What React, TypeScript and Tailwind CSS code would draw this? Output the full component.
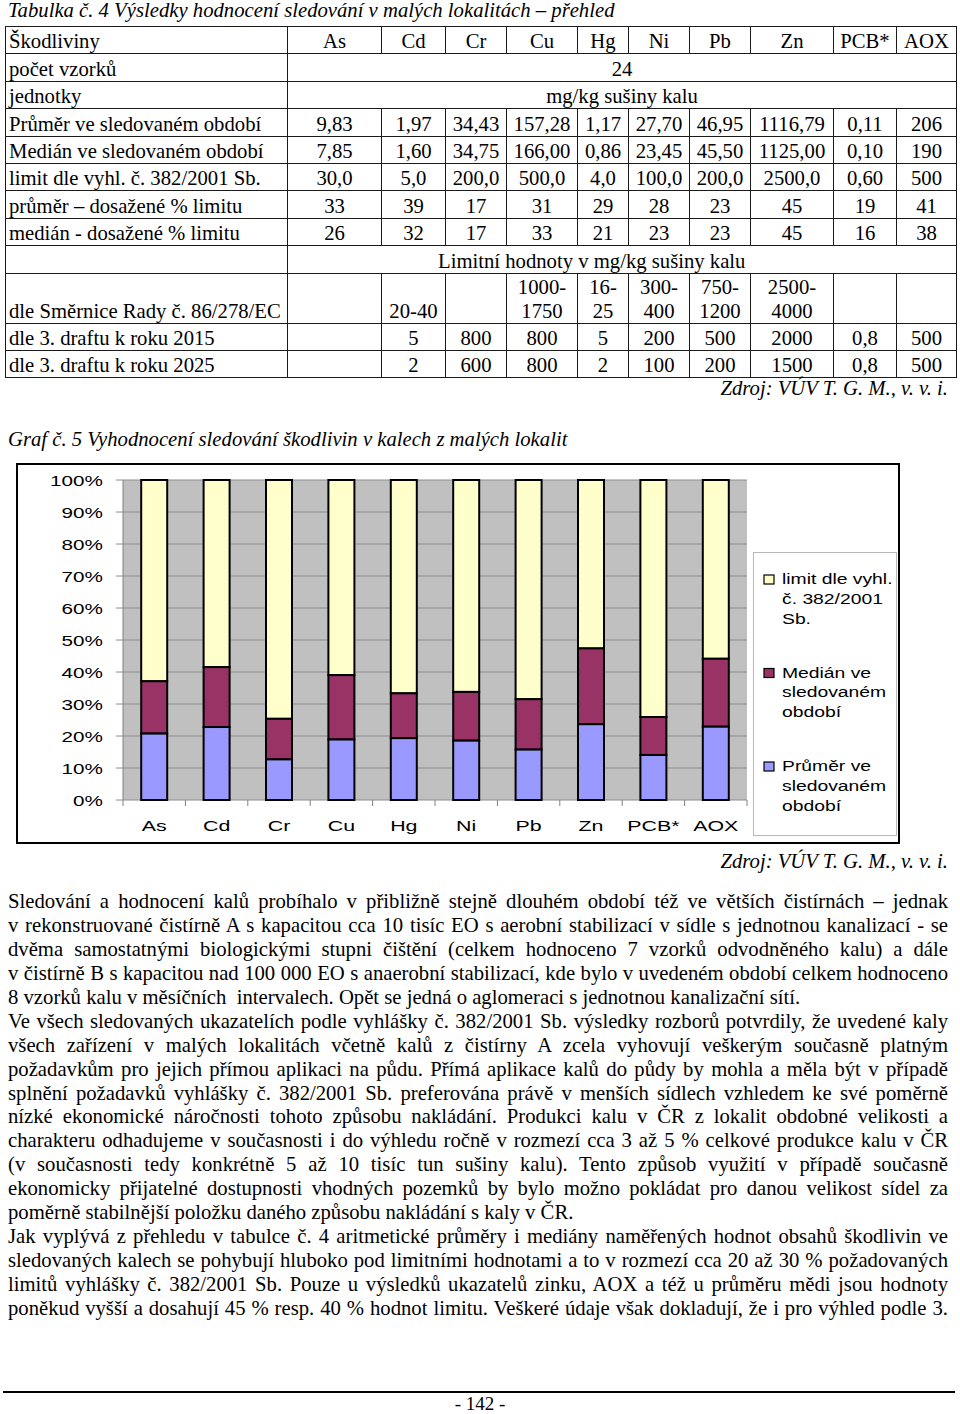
import React from 'react';

const prvky = ['As', 'Cd', 'Cr', 'Cu', 'Hg', 'Ni', 'Pb', 'Zn', 'PCB*', 'AOX'];
const sirky = [282, 94, 64, 61, 71, 51, 61, 61, 83, 63, 60];

const hodnoty: string[][] = [
  ['Průměr ve sledovaném období', '9,83', '1,97', '34,43', '157,28', '1,17', '27,70', '46,95', '1116,79', '0,11', '206'],
  ['Medián ve sledovaném období', '7,85', '1,60', '34,75', '166,00', '0,86', '23,45', '45,50', '1125,00', '0,10', '190'],
  ['limit dle vyhl. č. 382/2001 Sb.', '30,0', '5,0', '200,0', '500,0', '4,0', '100,0', '200,0', '2500,0', '0,60', '500'],
  ['průměr – dosažené % limitu', '33', '39', '17', '31', '29', '28', '23', '45', '19', '41'],
  ['medián - dosažené % limitu', '26', '32', '17', '33', '21', '23', '23', '45', '16', '38'],
];

const limity: string[][] = [
  ['dle 3. draftu k roku 2015', '', '5', '800', '800', '5', '200', '500', '2000', '0,8', '500'],
  ['dle 3. draftu k roku 2025', '', '2', '600', '800', '2', '100', '200', '1500', '0,8', '500'],
];

const smernice = ['dle Směrnice Rady č. 86/278/EC', '', '20-40', '', '1000-\n1750', '16-\n25', '300-\n400', '750-\n1200', '2500-\n4000', '', ''];

// průměr %, medián % limitu
const graf: [number, number][] = [
  [33, 26], [39, 32], [17, 17], [31, 33], [29, 21],
  [28, 23], [23, 23], [45, 45], [19, 16], [41, 38],
];

const odstavec: [string, boolean][] = [
  ['Sledování a hodnocení kalů probíhalo v přibližně stejně dlouhém období též ve větších čistírnách – jednak', true],
  ['v rekonstruované čistírně A s kapacitou cca 10 tisíc EO s aerobní stabilizací v sídle s jednotnou kanalizací - se', true],
  ['dvěma samostatnými biologickými stupni čištění (celkem hodnoceno 7 vzorků odvodněného kalu) a dále', true],
  ['v čistírně B s kapacitou nad 100 000 EO s anaerobní stabilizací, kde bylo v uvedeném období celkem hodnoceno', true],
  ['8 vzorků kalu v měsíčních\u00a0 intervalech. Opět se jedná o aglomeraci s jednotnou kanalizační sítí.', false],
  ['Ve všech sledovaných ukazatelích podle vyhlášky č. 382/2001 Sb. výsledky rozborů potvrdily, že uvedené kaly', true],
  ['všech zařízení v malých lokalitách včetně kalů z čistírny A zcela vyhovují veškerým současně platným', true],
  ['požadavkům pro jejich přímou aplikaci na půdu. Přímá aplikace kalů do půdy by mohla a měla být v případě', true],
  ['splnění požadavků vyhlášky č. 382/2001 Sb. preferována právě v menších sídlech vzhledem ke své poměrně', true],
  ['nízké ekonomické náročnosti tohoto způsobu nakládání. Produkci kalu v ČR z lokalit obdobné velikosti a', true],
  ['charakteru odhadujeme v současnosti i do výhledu ročně v rozmezí cca 3 až 5 % celkové produkce kalu v ČR', true],
  ['(v současnosti tedy konkrétně 5 až 10 tisíc tun sušiny kalu). Tento způsob využití v případě současně', true],
  ['ekonomicky přijatelné dostupnosti vhodných pozemků by bylo možno pokládat pro danou velikost sídel za', true],
  ['poměrně stabilnější položku daného způsobu nakládání s kaly v ČR.', false],
  ['Jak vyplývá z přehledu v tabulce č. 4 aritmetické průměry i mediány naměřených hodnot obsahů škodlivin ve', true],
  ['sledovaných kalech se pohybují hluboko pod limitními hodnotami a to v rozmezí cca 20 až 30 % požadovaných', true],
  ['limitů vyhlášky č. 382/2001 Sb. Pouze u výsledků ukazatelů zinku, AOX a též u průměru mědi jsou hodnoty', true],
  ['poněkud vyšší a dosahují 45 % resp. 40 % hodnot limitu. Veškeré údaje však dokladují, že i pro výhled podle 3.', true],
];

const td = 'border border-[#1a1a1a] p-0 align-bottom text-center';
const tdPrvni = 'border border-[#1a1a1a] p-0 pl-[3px] align-bottom text-left';

function Radek({ bunky }: { bunky: string[] }) {
  return (
    <tr className="h-[27.4px]">
      {bunky.map((b, i) => (
        <td key={i} className={i === 0 ? tdPrvni : td}>
          {b}
        </td>
      ))}
    </tr>
  );
}

function Tabulka() {
  return (
    <table className="ml-[5px] w-[951px] table-fixed border-collapse text-[20.7px] leading-[24px]">
      <colgroup>
        {sirky.map((w, i) => (
          <col key={i} style={{ width: w }} />
        ))}
      </colgroup>
      <tbody>
        <Radek bunky={['Škodliviny', ...prvky]} />
        <tr className="h-[27.4px]">
          <td className={tdPrvni}>počet vzorků</td>
          <td className={td} colSpan={10}>24</td>
        </tr>
        <tr className="h-[27.4px]">
          <td className={tdPrvni}>jednotky</td>
          <td className={td} colSpan={10}>mg/kg sušiny kalu</td>
        </tr>
        {hodnoty.map((r, i) => (
          <Radek key={i} bunky={r} />
        ))}
        <tr className="h-[27.4px]">
          <td className={tdPrvni}></td>
          <td className="border border-[#1a1a1a] p-0 pl-[150px] align-bottom text-left" colSpan={10}>
            Limitní hodnoty v mg/kg sušiny kalu
          </td>
        </tr>
        <tr className="h-[50px]">
          {smernice.map((b, i) => (
            <td key={i} className={(i === 0 ? tdPrvni : td) + ' whitespace-pre-line'}>
              {b}
            </td>
          ))}
        </tr>
        {limity.map((r, i) => (
          <Radek key={i} bunky={r} />
        ))}
      </tbody>
    </table>
  );
}

function Graf() {
  const x0 = 107;
  const y0 = 17;
  const vyska = 320;
  const krok = 62.4;
  const dno = y0 + vyska;
  const sans = "'Liberation Sans', Arial, sans-serif";
  const sx = 1.38;

  const popisek = (t: string, x: number, y: number, size: number, anchor: 'start' | 'middle' | 'end') => (
    <text
      key={t + x + y}
      transform={`translate(${x} ${y}) scale(${sx} 1)`}
      fontFamily={sans}
      fontSize={size}
      textAnchor={anchor}
      fill="#000"
    >
      {t}
    </text>
  );

  const legenda: [string, string[], number, number][] = [
    ['#ffffcc', ['limit dle vyhl.', 'č. 382/2001', 'Sb.'], 112, 121],
    ['#993366', ['Medián ve', 'sledovaném', 'období'], 205.5, 214.5],
    ['#9999ff', ['Průměr ve', 'sledovaném', 'období'], 299, 308],
  ];

  return (
    <svg width="884" height="381" className="ml-[16px] block">
      <rect x="1" y="1" width="882" height="379" fill="#fff" stroke="#000" strokeWidth="2" />
      <rect x={x0} y={y0} width={krok * 10} height={vyska} fill="#c0c0c0" />
      {Array.from({ length: 11 }, (_, i) => {
        const y = y0 + i * 32;
        return <line key={i} x1={x0 - 7} x2={x0 + krok * 10} y1={y} y2={y} stroke="#8c8c8c" strokeWidth="1" />;
      })}
      <line x1={x0} x2={x0} y1={y0} y2={dno} stroke="#808080" strokeWidth="1" />
      {Array.from({ length: 11 }, (_, i) => (
        <line key={i} x1={x0 + i * krok} x2={x0 + i * krok} y1={dno} y2={dno + 6} stroke="#808080" strokeWidth="1" />
      ))}
      {Array.from({ length: 11 }, (_, i) => popisek(`${(10 - i) * 10}%`, 87, y0 + i * 32 + 5.5, 15, 'end'))}
      {graf.map(([p, m], i) => {
        const celkem = p + m + 100;
        const hp = (p / celkem) * vyska;
        const hm = (m / celkem) * vyska;
        const cx = x0 + krok / 2 + i * krok;
        const x = cx - 13;
        return (
          <g key={i}>
            <rect x={x} y={y0} width="26" height={vyska - hp - hm} fill="#ffffcc" stroke="#000" strokeWidth="2" />
            <rect x={x} y={dno - hp - hm} width="26" height={hm} fill="#993366" stroke="#000" strokeWidth="2" />
            <rect x={x} y={dno - hp} width="26" height={hp} fill="#9999ff" stroke="#000" strokeWidth="2" />
          </g>
        );
      })}
      {prvky.map((t, i) => popisek(t, x0 + krok / 2 + i * krok, 368, 15.5, 'middle'))}
      <rect x="737.5" y="89.5" width="143" height="283" fill="#fff" stroke="#b8b8b8" strokeWidth="1" />
      {legenda.map(([barva, radky, ys, yt]) => (
        <g key={barva}>
          <rect x="748" y={ys} width="10" height="9" fill={barva} stroke="#000" strokeWidth="1.2" />
          {radky.map((r, j) => popisek(r, 766, yt + j * 19.8, 14, 'start'))}
        </g>
      ))}
    </svg>
  );
}

export default function App() {
  return (
    <div className="relative h-[1414px] w-[960px] overflow-hidden bg-white font-['Liberation_Serif','Times_New_Roman',serif] text-[20.7px] text-black">
      <div className="h-[26px] pl-2 italic leading-[21px]">
        Tabulka č. 4 Výsledky hodnocení sledování v malých lokalitách – přehled
      </div>
      <Tabulka />
      <div className="pr-3 text-right italic leading-[20px]">Zdroj: VÚV T. G. M., v. v. i.</div>
      <div className="mt-[31px] pl-2 italic leading-[20px]">
        Graf č. 5 Vyhodnocení sledování škodlivin v kalech z malých lokalit
      </div>
      <div className="mt-[14px]">
        <Graf />
      </div>
      <div className="mt-[7px] pr-3 text-right italic leading-[20px]">Zdroj: VÚV T. G. M., v. v. i.</div>
      <div className="ml-2 mt-[19px] w-[940px] leading-[23.9px]">
        {odstavec.map(([t, j], i) => (
          <div key={i} className={j ? 'text-justify [text-align-last:justify]' : 'text-left'}>
            {t}
          </div>
        ))}
      </div>
      <div className="ml-[3px] mt-[70px] h-[2px] w-[952px] bg-black" />
      <div className="mt-[1px] text-center text-[19px] leading-[19px]">- 142 -</div>
    </div>
  );
}
